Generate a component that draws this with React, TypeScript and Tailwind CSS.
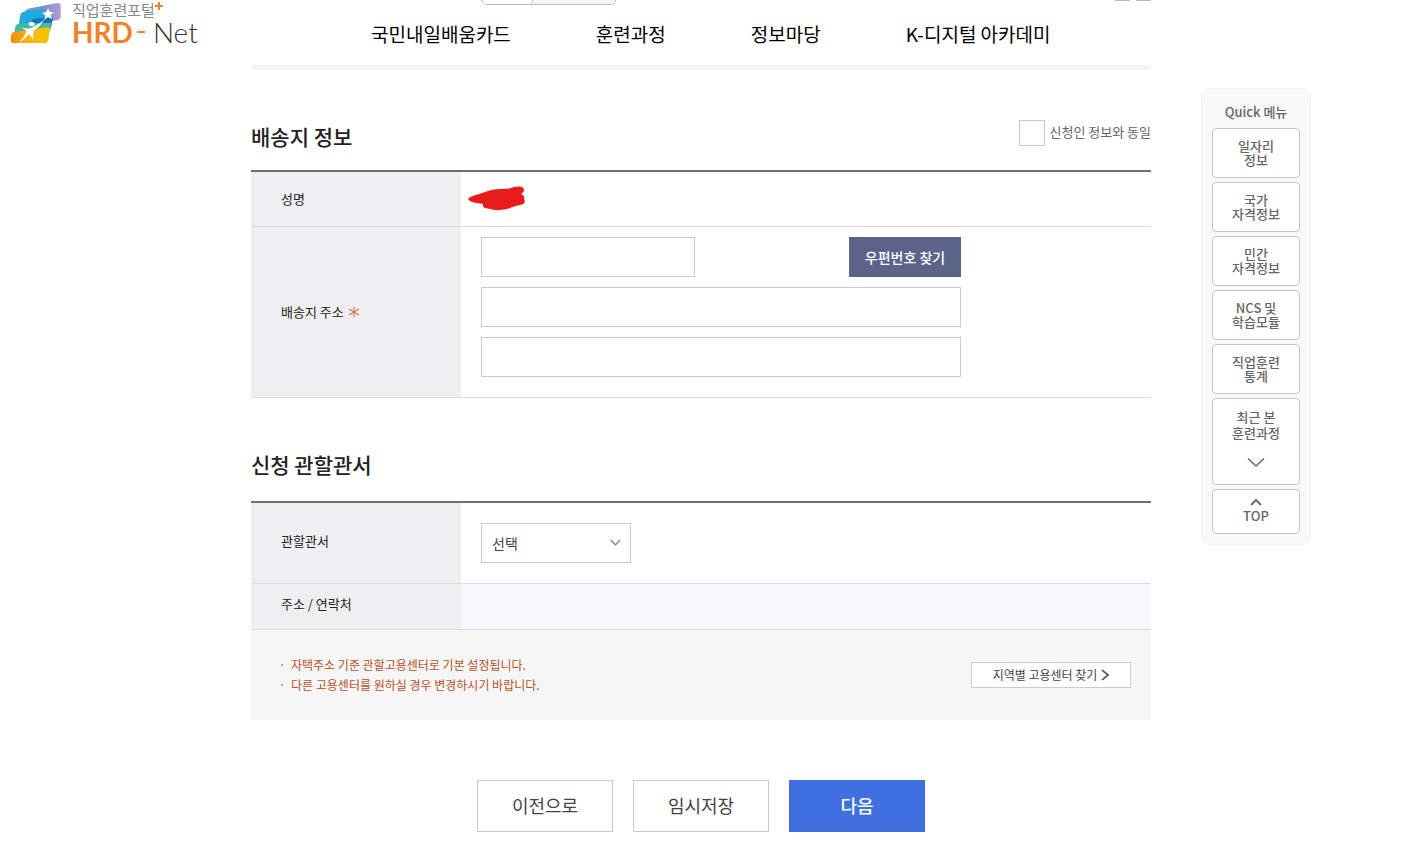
import { useState } from "react";

const navItems = ["국민내일배움카드", "훈련과정", "정보마당", "K-디지털 아카데미"];

const quickLinks = [
  ["일자리", "정보"],
  ["국가", "자격정보"],
  ["민간", "자격정보"],
  ["NCS 및", "학습모듈"],
  ["직업훈련", "통계"],
];

const notices = [
  "자택주소 기준 관할고용센터로 기본 설정됩니다.",
  "다른 고용센터를 원하실 경우 변경하시기 바랍니다.",
];

export default function App() {
  return (
    <div className="grid grid-cols-[251px_minmax(0,1fr)_274px] bg-white pb-4 font-['Noto_Sans_CJK_KR',sans-serif] text-[#222]">
      <Logo />
      <div>
        <Header />
        <main>
          <DeliverySection />
          <OfficeSection />
          <div className="mt-15 flex justify-center gap-5">
            <button className="h-13 w-34 border border-[#ccc] bg-white pb-0.5 text-lg text-[#444]">이전으로</button>
            <button className="h-13 w-34 border border-[#ccc] bg-white pb-0.5 text-lg text-[#444]">임시저장</button>
            <button className="h-13 w-34 bg-[#4070df] pb-0.5 text-lg font-medium text-white">다음</button>
          </div>
        </main>
      </div>
      <QuickMenu />
    </div>
  );
}

function Header() {
  return (
    <header className="relative h-[70px] border-b-5 border-[#f5f5f5]">
      <div className="absolute top-0 left-[231px] flex h-[5px] w-[134px] overflow-hidden rounded-b-md border border-t-0 border-[#bbb]">
        <div className="w-[50px] rounded-br-md border-r border-[#bbb] bg-white"></div>
        <div className="flex-1 bg-[#f5f5f5]"></div>
      </div>
      <div className="absolute top-0 right-0 flex gap-1.5">
        <div className="h-px w-[15px] bg-[#bbb]"></div>
        <div className="h-px w-[15px] bg-[#bbb]"></div>
      </div>
      <nav className="flex h-full items-center gap-[85px] pt-1 pl-[120px] text-[19px] whitespace-nowrap text-black">
        {navItems.map((item) => (
          <a key={item} href="#">
            {item}
          </a>
        ))}
      </nav>
    </header>
  );
}

function DeliverySection() {
  const [same, setSame] = useState(false);

  return (
    <section>
      <div className="flex h-[100px] items-end justify-between pb-4">
        <h2 className="text-[21px] leading-9 font-medium">배송지 정보</h2>
        <label className="mb-2 flex items-center gap-1 text-[13px] text-[#666]">
          <input
            type="checkbox"
            checked={same}
            onChange={(e) => setSame(e.target.checked)}
            className="size-[26px] appearance-none border border-[#ccc] bg-white checked:bg-[#4070df]"
          />
          <span className="pb-0.5">신청인 정보와 동일</span>
        </label>
      </div>
      <table className="w-full border-collapse border-t-2 border-[#6f6e73] text-[13px]">
        <tbody>
          <tr className="h-[55px] border-b border-[#ddd]">
            <th scope="row" className="w-[210px] bg-[#efeff1] pl-[30px] text-left font-normal">
              성명
            </th>
            <td className="pl-[7px]">
              <svg width="57" height="25" viewBox="0 0 57 25" role="img" aria-label="성명">
                <path
                  d="M1 12C3 10 12 8 17 6C22 4 27 3 32 3C37 3 42 3 46 1C51 0 56 0 56 4C56 6 54 7 53 8C56 9 57 11 56 13C58 16 56 19 52 19C47 20 42 22 39 23C33 24 27 25 23 23C18 22 14 22 15 18C11 17 6 17 2 15Q-1 13 1 12Z"
                  fill="#e81c1c"
                />
              </svg>
            </td>
          </tr>
          <tr className="border-b border-[#ddd]">
            <th scope="row" className="w-[210px] bg-[#efeff1] pl-[30px] text-left font-normal">
              <label htmlFor="zipcode" className="flex items-center gap-1">
                배송지 주소
                <svg width="12" height="12" viewBox="0 0 12 12" stroke="#ca7a50" strokeWidth="1.2" aria-hidden="true">
                  <path d="M6 1V11M1 3L11 9M11 3L1 9" />
                </svg>
              </label>
            </th>
            <td className="px-5 pt-2.5 pb-5">
              <div className="flex max-w-[480px] flex-col gap-2.5">
                <div className="flex justify-between">
                  <input id="zipcode" type="text" className="h-10 w-[214px] border border-[#ccc] px-2.5" />
                  <button className="h-10 w-28 bg-[#5b6389] text-sm font-medium text-white">우편번호 찾기</button>
                </div>
                <input type="text" aria-label="주소" className="h-10 w-full border border-[#ccc] px-2.5" />
                <input type="text" aria-label="상세주소" className="h-10 w-full border border-[#ccc] px-2.5" />
              </div>
            </td>
          </tr>
        </tbody>
      </table>
    </section>
  );
}

function OfficeSection() {
  return (
    <section>
      <h2 className="pt-12 pb-[19px] text-[21px] leading-9 font-medium">신청 관할관서</h2>
      <table className="w-full border-collapse border-t-2 border-[#6f6e73] text-[13px]">
        <tbody>
          <tr className="border-b border-[#ddd]">
            <th scope="row" className="w-[210px] bg-[#efeff1] pb-1 pl-[30px] text-left font-normal">
              <label htmlFor="office">관할관서</label>
            </th>
            <td className="px-5 py-5">
              <div className="relative w-[150px]">
                <select
                  id="office"
                  className="block h-10 w-full appearance-none border border-[#ccc] bg-white px-2.5 text-sm text-[#444]"
                >
                  <option>선택</option>
                </select>
                <svg
                  className="pointer-events-none absolute top-4 right-2.5"
                  width="11"
                  height="8"
                  viewBox="0 0 11 8"
                  fill="none"
                  stroke="#888"
                  strokeWidth="1.5"
                >
                  <path d="M1 1L5.5 6L10 1" />
                </svg>
              </div>
            </td>
          </tr>
          <tr className="h-[46px] border-b border-[#ddd]">
            <th scope="row" className="w-[210px] bg-[#efeff1] pb-1 pl-[30px] text-left font-normal">
              주소 / 연락처
            </th>
            <td className="bg-[#f5f9fd]"></td>
          </tr>
        </tbody>
      </table>
      <div className="flex h-[90px] items-center justify-between bg-[#f6f6f6] pr-5 pl-[30px]">
        <ul className="text-xs leading-5 text-[#b9501f]">
          {notices.map((notice) => (
            <li key={notice} className="flex items-center gap-2">
              <span className="size-0.5 bg-[#aaa]"></span>
              {notice}
            </li>
          ))}
        </ul>
        <button className="flex h-[26px] w-40 items-center justify-center gap-1 border border-[#ccc] bg-white text-xs text-[#444]">
          지역별 고용센터 찾기
          <svg width="8" height="12" viewBox="0 0 8 12" fill="none" stroke="#444" strokeWidth="1.6">
            <path d="M1 1L7 6L1 11" />
          </svg>
        </button>
      </div>
    </section>
  );
}

function QuickMenu() {
  return (
    <aside className="mt-[88px] ml-[50px] flex w-[110px] flex-col gap-1 self-start rounded-[10px] border border-[#f0f0f0] bg-[#f9f9f9] px-2.5 pt-3 pb-2.5 text-[13px] leading-[14px] font-medium text-[#666]">
      <h2 className="pb-0.5 text-center leading-[21px]">Quick 메뉴</h2>
      {quickLinks.map(([first, second]) => (
        <a
          key={first + second}
          href="#"
          className="flex h-[50px] flex-col items-center justify-center rounded border border-[#c4c4c4] bg-white"
        >
          <span>{first}</span>
          <span>{second}</span>
        </a>
      ))}
      <button className="flex h-[87px] flex-col items-center rounded border border-[#c4c4c4] bg-white pt-2.5 leading-4">
        <span>최근 본</span>
        <span>훈련과정</span>
        <svg className="mt-4" width="18" height="11" viewBox="0 0 18 11" fill="none" stroke="#666" strokeWidth="1.5">
          <path d="M1 1.5L9 9L17 1.5" />
        </svg>
      </button>
      <a href="#" className="flex h-[45px] flex-col items-center rounded border border-[#c4c4c4] bg-white pt-2">
        <svg width="12" height="8" viewBox="0 0 12 8" fill="none" stroke="#666" strokeWidth="1.8">
          <path d="M1 7L6 2L11 7" />
        </svg>
        <span className="leading-5">TOP</span>
      </a>
    </aside>
  );
}

function Logo() {
  return (
    <a href="#" className="flex items-start gap-2.5 self-start pt-0.5 pl-2.5">
      <svg width="52" height="43" viewBox="30 6 156 129" aria-hidden="true">
        <defs>
          <linearGradient id="violet" x1="0" x2="1">
            <stop offset="0" stopColor="#4aa5dc" />
            <stop offset="0.55" stopColor="#7d8fcd" />
            <stop offset="1" stopColor="#b59ad0" />
          </linearGradient>
          <linearGradient id="gold" x1="0" x2="1">
            <stop offset="0" stopColor="#f08a12" />
            <stop offset="0.5" stopColor="#fbb80d" />
            <stop offset="1" stopColor="#f5c500" />
          </linearGradient>
        </defs>
        <path d="M76 34Q77 28 84 26L172 9Q182 8 182 17V49Q182 58 173 60L76 78Z" fill="url(#violet)" />
        <path d="M60 48Q62 37 72 35L128 27L150 55L142 82L54 90Z" fill="#22a9df" />
        <path d="M98 57L154 51Q160 51 158 59L152 86Q150 94 142 95L78 99Z" fill="#1273b9" />
        <path d="M46 80Q48 72 58 71L148 68Q156 68 153 78L146 102L42 104Z" fill="#43b9a0" />
        <path d="M34 105Q36 96 46 95L142 82Q151 81 149 91L145 119Q143 129 133 129H42Q31 129 32 119Z" fill="url(#gold)" />
        <path d="M144 24L149 36L161 36L152 45L156 58L144 51L133 60L136 46L126 39L139 36Z" fill="#fff" />
        <ellipse cx="95" cy="72" rx="9" ry="6" fill="#fff" />
        <path d="M64 81Q82 89 94 83Q116 75 133 57Q121 80 103 91Q97 99 101 119Q91 108 87 103Q77 116 57 128Q72 113 80 94Q72 87 64 81Z" fill="#fff" />
      </svg>
      <div className="whitespace-nowrap">
        <div className="flex h-4 items-center text-[15px] leading-4 text-[#888]">
          직업훈련포털
          <svg className="mb-2" width="8" height="8" viewBox="0 0 8 8" stroke="#f0832a" strokeWidth="2">
            <path d="M4 0V8M0 4H8" />
          </svg>
        </div>
        <div className="flex items-center gap-1 font-['Lato',sans-serif] text-[28px] leading-7">
          <span className="font-bold text-[#f0832a]">HRD</span>
          <span className="h-0.5 w-2 bg-[#f0832a]"></span>
          <span className="ml-1 font-light text-[#333]">Net</span>
        </div>
      </div>
    </a>
  );
}
